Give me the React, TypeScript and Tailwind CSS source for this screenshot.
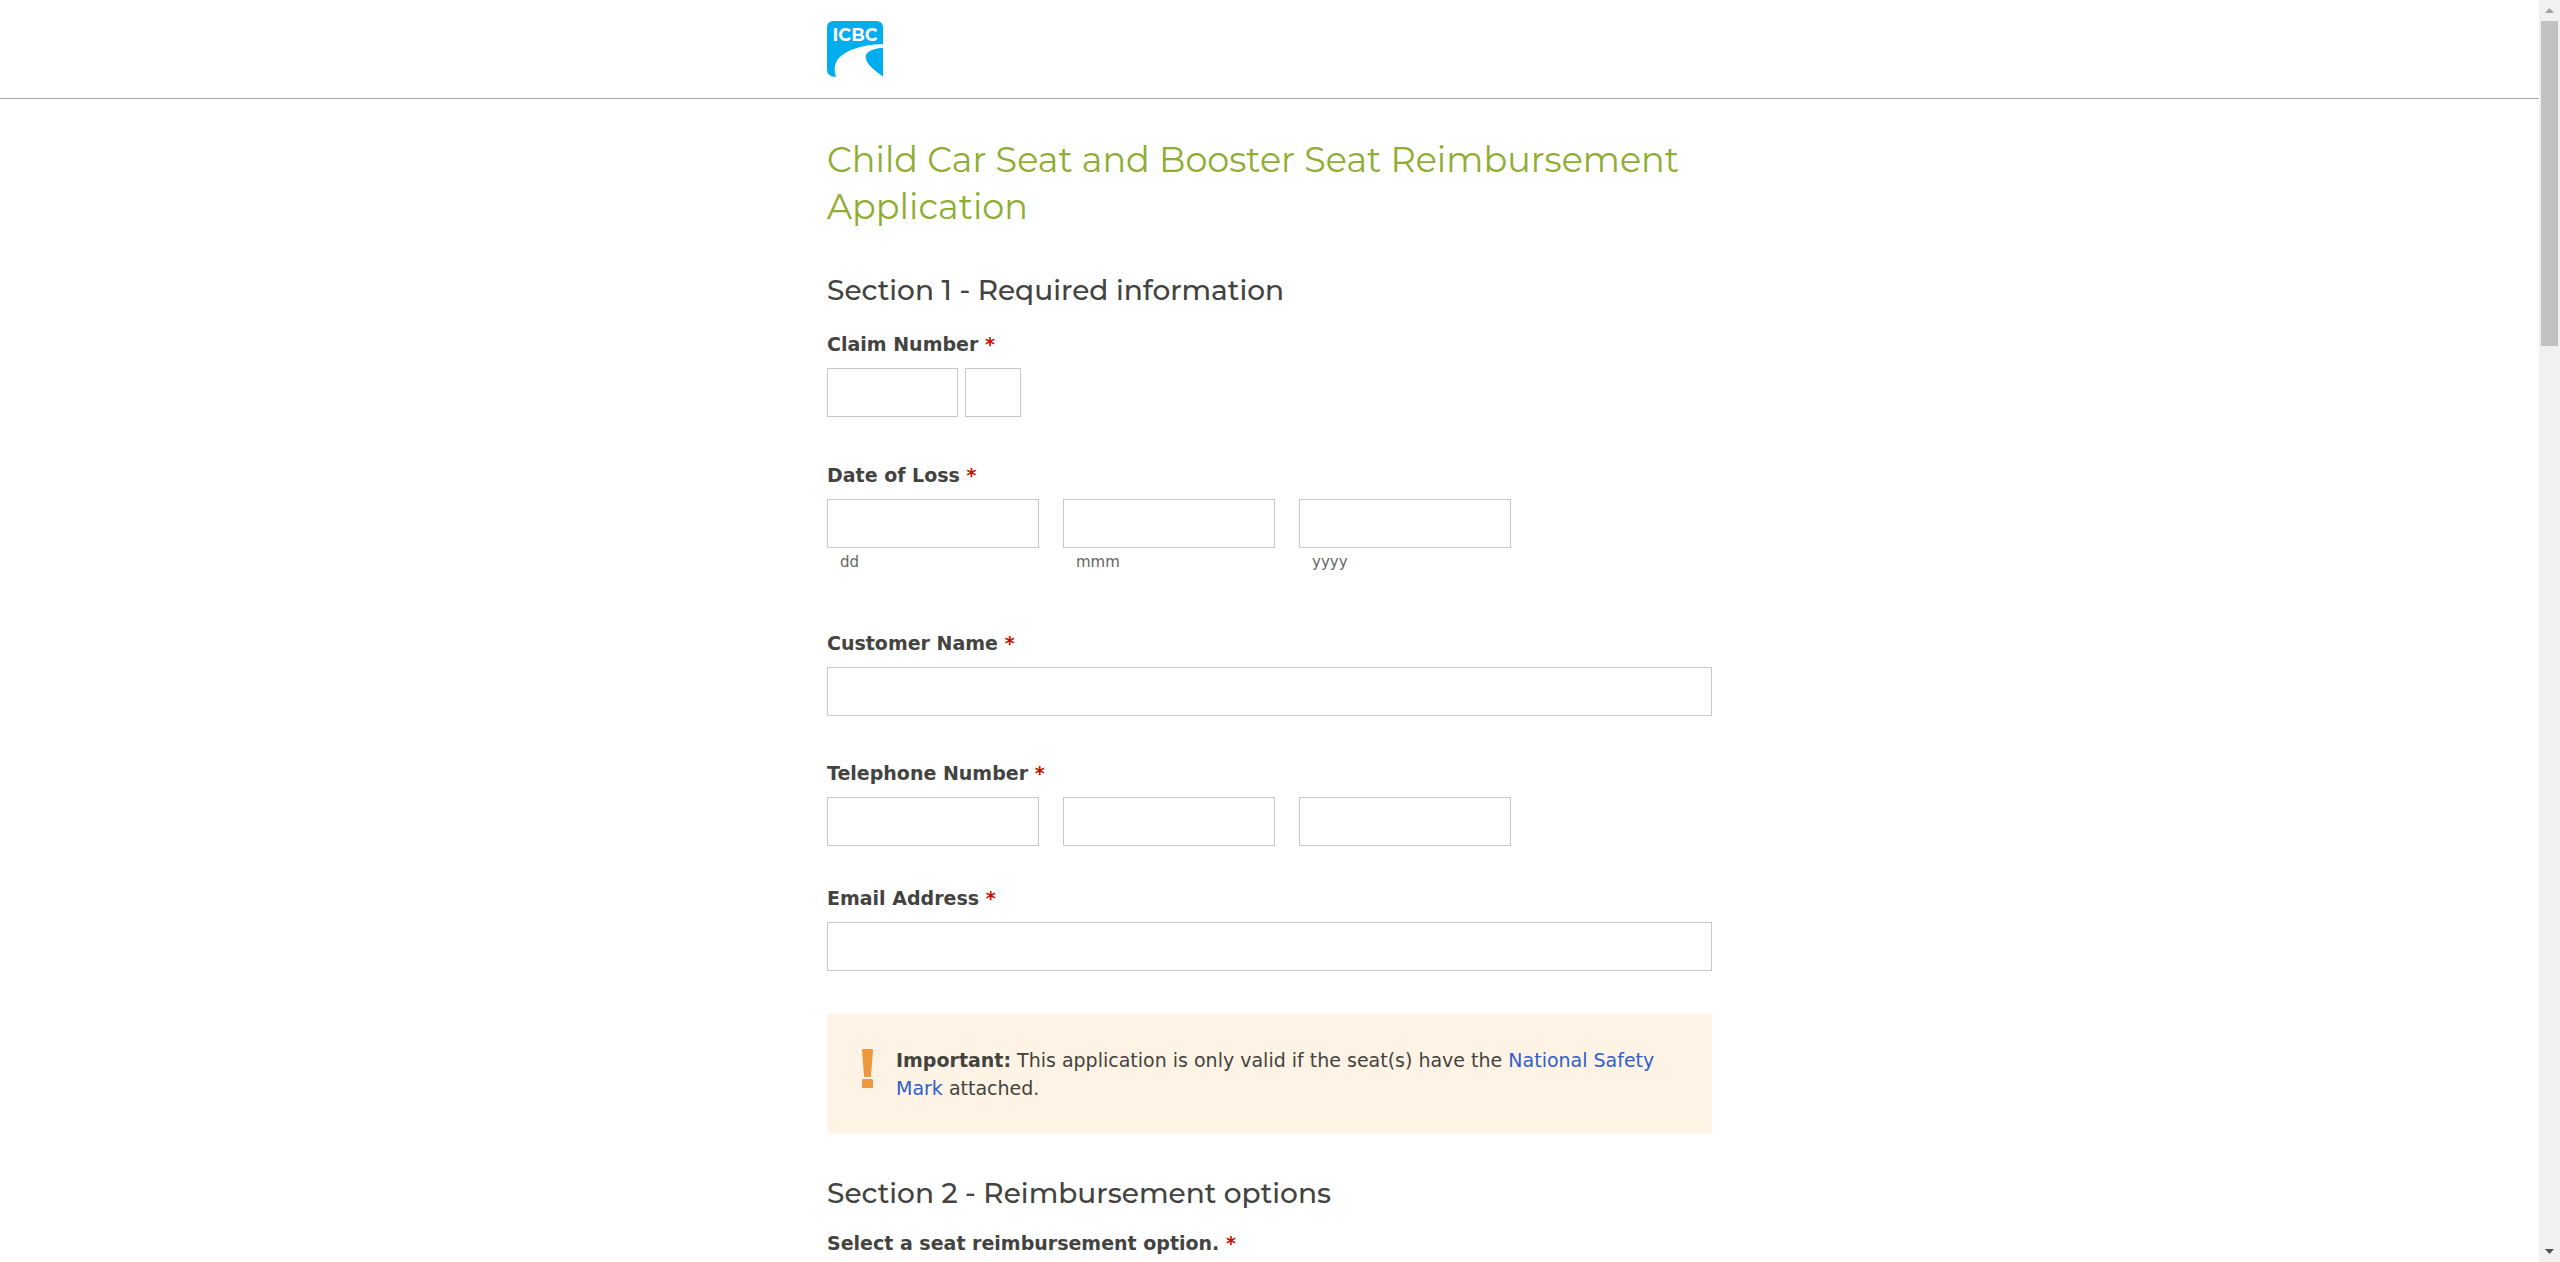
import React, { useId } from "react";

function Logo() {
  return (
    <svg className="size-14" viewBox="0 0 168 168" role="img" aria-label="ICBC">
      <path
        fill="#00adef"
        d="M20 0H148Q168 0 168 20V69C105 70 23 92 23 144Q23 156 27 168Q0 166 0 146V20Q0 0 20 0Z"
      />
      <path fill="#00adef" d="M168 80C140 82 116 91 116 108C116 128 143 149 168 167Z" />
      <text
        x="84"
        y="59"
        textAnchor="middle"
        fill="#fff"
        fontFamily="Montserrat, Inter, sans-serif"
        fontWeight="700"
        fontSize="53"
      >
        ICBC
      </text>
    </svg>
  );
}

function Caption({ children }: { children: React.ReactNode }) {
  return (
    <>
      {children} <span className="text-[#c41200]">*</span>
    </>
  );
}

const labelClass = "block text-[19px] leading-7 font-bold";
const inputClass = "block h-[49px] border border-[#c8c8c8] bg-white px-3 outline-none";

function TextField({ label, type = "text" }: { label: string; type?: string }) {
  const id = useId();
  return (
    <div>
      <label htmlFor={id} className={labelClass}>
        <Caption>{label}</Caption>
      </label>
      <input id={id} type={type} className={`${inputClass} mt-2.5 w-full`} />
    </div>
  );
}

function GroupField({ label, children }: { label: string; children: React.ReactNode }) {
  return (
    <fieldset>
      <legend className={labelClass}>
        <Caption>{label}</Caption>
      </legend>
      <div className="mt-2.5 flex">{children}</div>
    </fieldset>
  );
}

function DatePart({ hint }: { hint: string }) {
  const id = useId();
  return (
    <div className="w-[212px]">
      <input id={id} type="text" className={`${inputClass} w-full`} />
      <label htmlFor={id} className="mt-1 block pl-[13px] text-[15px] leading-5 text-[#666]">
        {hint}
      </label>
    </div>
  );
}

function Scrollbar() {
  return (
    <div
      className="flex w-[21px] shrink-0 flex-col items-center justify-between bg-[#f1f1f1]"
      aria-hidden="true"
    >
      <div className="flex w-full flex-col items-center">
        <svg className="my-2 h-[5px] w-[9px]" viewBox="0 0 9 5">
          <path fill="#a3a3a3" d="M4.500 0L9 5H0Z" />
        </svg>
        <div className="h-[325px] w-[17px] bg-[#c1c1c1]" />
      </div>
      <svg className="my-2 h-[5px] w-[9px]" viewBox="0 0 9 5">
        <path fill="#505050" d="M0 0H9L4.500 5Z" />
      </svg>
    </div>
  );
}

export default function App() {
  return (
    <div className="flex h-screen overflow-hidden bg-white font-['Verdana','DejaVu_Sans',sans-serif] text-[#43433f]">
      <div className="min-w-0 flex-1 overflow-hidden">
        <header className="border-b border-[#a5a5a5] pt-[21px] pb-[21px]">
          <div className="mx-auto max-w-[885px]">
            <Logo />
          </div>
        </header>

        <main className="mx-auto max-w-[885px]">
          <h1 className="mt-[37px] font-['Montserrat','Inter',sans-serif] text-[35px] leading-[47px] font-normal text-[#8fad33]">
            Child Car Seat and Booster Seat Reimbursement Application
          </h1>

          <form>
            <h2 className="mt-10 font-['Montserrat','Inter',sans-serif] text-[28px] leading-10 font-medium">
              Section 1 - Required information
            </h2>

            <div className="mt-5">
              <GroupField label="Claim Number">
                <input type="text" aria-label="Claim number" className={`${inputClass} w-[131px]`} />
                <input type="text" aria-label="Claim number suffix" className={`${inputClass} ml-[7px] w-14`} />
              </GroupField>
            </div>

            <div className="mt-11">
              <GroupField label="Date of Loss">
                <div className="flex gap-6">
                  <DatePart hint="dd" />
                  <DatePart hint="mmm" />
                  <DatePart hint="yyyy" />
                </div>
              </GroupField>
            </div>

            <div className="mt-[57px]">
              <TextField label="Customer Name" />
            </div>

            <div className="mt-[43px]">
              <GroupField label="Telephone Number">
                <div className="flex gap-6">
                  <input type="tel" aria-label="Area code" className={`${inputClass} w-[212px]`} />
                  <input type="tel" aria-label="Prefix" className={`${inputClass} w-[212px]`} />
                  <input type="tel" aria-label="Line number" className={`${inputClass} w-[212px]`} />
                </div>
              </GroupField>
            </div>

            <div className="mt-[38px]">
              <TextField label="Email Address" type="email" />
            </div>

            <div className="mt-[43px] flex items-start bg-[#fff3e5] pt-8 pr-12 pb-[31px] pl-[35px]">
              <svg className="mt-[3px] mr-[23px] h-10 w-[11px] shrink-0" viewBox="0 0 11 40" aria-hidden="true">
                <path fill="#eb983f" d="M0 1Q0 0 1 0H10Q11 0 11 1L9 27Q9 28 8 28H3Q2 28 2 27Z" />
                <rect fill="#eb983f" y="30" width="11" height="9" rx="1.500" />
              </svg>
              <p className="text-[19px] leading-7">
                <strong>Important:</strong> This application is only valid if the seat(s) have the{" "}
                <a href="#national-safety-mark" className="text-[#2f5fce]">
                  National Safety Mark
                </a>{" "}
                attached.
              </p>
            </div>

            <h2 className="mt-10 font-['Montserrat','Inter',sans-serif] text-[28px] leading-10 font-medium">
              Section 2 - Reimbursement options
            </h2>
            <fieldset className="mt-4">
              <legend className={labelClass}>
                <Caption>Select a seat reimbursement option.</Caption>
              </legend>
            </fieldset>
          </form>
        </main>
      </div>
      <Scrollbar />
    </div>
  );
}
